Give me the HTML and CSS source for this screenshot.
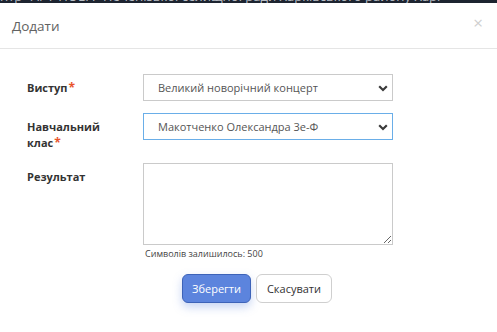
FILE: index.html
```html
<!DOCTYPE html>
<html lang="uk">
<head>
<meta charset="utf-8">
<title>Додати</title>
<link rel="stylesheet" href="styles.css">
</head>
<body>
<div class="backdrop"><span class="backdrop-text">нтр "АРТ-НОВА" Печенізької селищної ради Харківського району Харківської</span><span class="backdrop-x">×</span></div>
<div class="modal">
  <div class="modal-header">
    <h4 class="modal-title">Додати</h4>
    <button class="close" type="button">×</button>
  </div>
  <div class="modal-body">
    <div class="form-row">
      <label class="form-label">Виступ<span class="req">*</span></label>
      <div class="form-field">
        <div class="select">
          <span class="select-text">Великий новорічний концерт</span>
          <svg class="chev" width="10" height="7" viewBox="0 0 10 7"><polyline points="1.2,1.3 5,5 8.8,1.3" fill="none" stroke="#3a3a3a" stroke-width="2.2"/></svg>
        </div>
      </div>
    </div>
    <div class="form-row">
      <label class="form-label">Навчальний клас<span class="req">*</span></label>
      <div class="form-field">
        <div class="select focused">
          <span class="select-text">Макотченко Олександра 3е-Ф</span>
          <svg class="chev" width="10" height="7" viewBox="0 0 10 7"><polyline points="1.2,1.3 5,5 8.8,1.3" fill="none" stroke="#3a3a3a" stroke-width="2.2"/></svg>
        </div>
      </div>
    </div>
    <div class="form-row">
      <label class="form-label">Результат</label>
      <div class="form-field">
        <textarea class="textarea"></textarea>
        <div class="counter">Символів залишилось: 500</div>
      </div>
    </div>
  </div>
  <div class="modal-footer">
    <button class="btn btn-primary" type="button">Зберегти</button>
    <button class="btn btn-default" type="button">Скасувати</button>
  </div>
</div>
</body>
</html>
```
FILE: styles.css
```css
* { box-sizing: border-box; }
html, body { margin: 0; padding: 0; background: #fff; }
body {
  font-family: "Open Sans", "Noto Sans", sans-serif;
  width: 497px;
  height: 332px;
  overflow: hidden;
}
.backdrop {
  height: 3px;
  background: #1d2430;
  overflow: hidden;
  position: relative;
  white-space: nowrap;
}
.backdrop-text {
  display: block;
  width: 440px;
  overflow: hidden;
  color: #b9bec6;
  font-size: 13px;
  line-height: 13px;
  margin-top: -10px;
}
.backdrop-x {
  position: absolute;
  left: 462px;
  top: -10px;
  color: #9aa0a8;
  font-size: 15px;
  line-height: 13px;
}
.modal { background: #fff; }
.modal-header {
  height: 46px;
  border-bottom: 1px solid #e5e5e5;
  display: flex;
  align-items: center;
  justify-content: space-between;
  padding: 0 12px 0 12px;
}
.modal-title {
  margin: 0;
  font-size: 13.5px;
  font-weight: 400;
  color: #626262;
  line-height: 20px;
  padding-top: 1px;
}
.close {
  border: 0;
  background: none;
  padding: 0;
  margin: 0 2px 6px 0;
  font-family: "Open Sans", sans-serif;
  font-size: 17px;
  line-height: 17px;
  color: #cfcfcf;
}
.modal-body {
  padding: 25px 0 0 27px;
}
.form-row {
  display: flex;
  margin-bottom: 12px;
}
.form-label {
  width: 116px;
  padding-top: 6px;
  font-size: 11px;
  line-height: 16px;
  font-weight: 700;
  color: #333;
  padding-right: 30px;
}
.req {
  color: #e8532b;
  margin-left: 1px;
  font-size: 12px;
}
.form-field { width: 250px; }
.select {
  height: 27px;
  border: 1px solid #cacaca;
  display: flex;
  align-items: center;
  justify-content: space-between;
  padding: 0 4px 0 14px;
}
.select.focused { border-color: #6aaee8; }
.select-text {
  font-size: 11px;
  color: #555;
}
.chev { display: block; margin-top: 1px; }
.textarea {
  display: block;
  width: 250px;
  height: 82px;
  border: 1px solid #cacaca;
  margin: 0;
  padding: 4px;
  resize: vertical;
  font-family: inherit;
}
.counter {
  font-size: 9px;
  color: #444;
  margin: 3px 0 0 2px;
  line-height: 12px;
}
.modal-footer {
  display: flex;
  justify-content: center;
  gap: 5px;
  padding: 2px 0 0 17px;
}
.btn {
  height: 29px;
  border-radius: 6px;
  font-family: "Open Sans", sans-serif;
  font-size: 11px;
  padding: 0 6px;
  margin: 0;
}
.btn-primary {
  width: 69px;
  background: #5c84dd;
  border: 1px solid #3d63b8;
  color: #fff;
  box-shadow: 0 4px 10px rgba(92, 132, 221, 0.35);
}
.btn-default {
  width: 76px;
  background: #fff;
  border: 1px solid #cfcfcf;
  color: #333;
}
```
